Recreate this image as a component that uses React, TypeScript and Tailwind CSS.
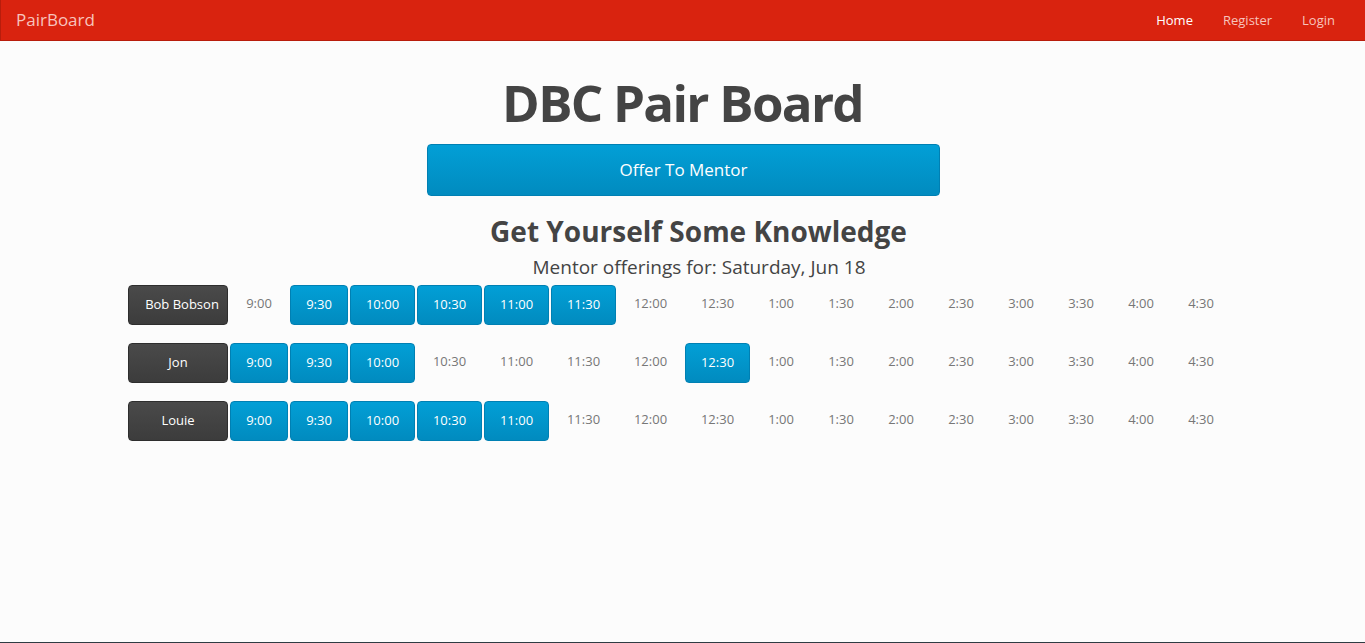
import React from "react";

const times = ["9:00","9:30","10:00","10:30","11:00","11:30","12:00","12:30","1:00","1:30","2:00","2:30","3:00","3:30","4:00","4:30"];
const widths = ["w-[58px]","w-[58px]","w-[65px]","w-[65px]","w-[65px]","w-[65px]","w-[65px]","w-[65px]","w-[58px]","w-[58px]","w-[58px]","w-[58px]","w-[58px]","w-[58px]","w-[58px]","w-[58px]"];

const rows: { name: string; on: string[]; pad: string }[] = [
  { name: "Bob Bobson", on: ["9:30","10:00","10:30","11:00","11:30"], pad: "pl-[8px]" },
  { name: "Jon", on: ["9:00","9:30","10:00","12:30"], pad: "" },
  { name: "Louie", on: ["9:00","9:30","10:00","10:30","11:00"], pad: "" },
];

export default function App() {
  return (
    <div
      className="h-[643px] flex flex-col bg-[#fcfcfc] text-[#444]"
      style={{ fontFamily: '"Open Sans", "Noto Sans", sans-serif' }}
    >
      <nav className="h-[41px] shrink-0 bg-[#d9230f] border-b border-l border-[#b81d0c] flex items-center justify-between">
        <span className="pl-[15px] text-[17px] text-[#f7c4bd]">PairBoard</span>
        <div className="flex items-center text-[13px] pr-[30px] pt-[2px]">
          <span className="px-[15px] text-white">Home</span>
          <span className="px-[15px] text-[#f7c4bd]">Register</span>
          <span className="pl-[15px] text-[#f7c4bd]">Login</span>
        </div>
      </nav>
      <main className="flex-1 flex flex-col">
        <h1 className="mt-[31px] text-center text-[51px] tracking-[-1.7px] leading-[60px] font-bold text-[#444]">DBC Pair Board</h1>
        <div className="flex justify-center mt-[12px] pl-[2px]">
          <button className="w-[513px] h-[52px] rounded-[4px] border border-[#0080b3] bg-gradient-to-b from-[#029fd6] to-[#018bbf] text-white text-[17px]">
            Offer To Mentor
          </button>
        </div>
        <h2 className="mt-[15px] pl-[32px] text-center text-[28px] leading-[40px] font-bold text-[#444]">Get Yourself Some Knowledge</h2>
        <p className="mt-[3px] pl-[33px] text-center text-[19px] leading-[26px] text-[#444]">Mentor offerings for: Saturday, Jun 18</p>
        <div className="mt-[5px] pl-[128px] flex flex-col gap-[18px]">
          {rows.map((r) => (
            <div key={r.name} className="flex gap-[2px] h-[40px]">
              <div className={`w-[100px] h-[40px] rounded-[4px] border border-[#2e2e2e] bg-gradient-to-b from-[#4a4a4a] to-[#3c3c3c] text-white text-[13px] flex items-center justify-center whitespace-nowrap ${r.pad}`}>
                {r.name}
              </div>
              {times.map((t, i) =>
                r.on.includes(t) ? (
                  <div key={t} className={`${widths[i]} h-[40px] rounded-[4px] border border-[#0080b3] bg-gradient-to-b from-[#029fd6] to-[#018bbf] text-white text-[13px] flex items-center justify-center`}>
                    {t}
                  </div>
                ) : (
                  <div key={t} className={`${widths[i]} h-[40px] text-[#777] text-[13px] flex items-center justify-center`}>
                    <span className="-mt-[2px]">{t}</span>
                  </div>
                )
              )}
            </div>
          ))}
        </div>
      </main>
      <div className="h-px bg-[#2f3b42] shrink-0" />
    </div>
  );
}
